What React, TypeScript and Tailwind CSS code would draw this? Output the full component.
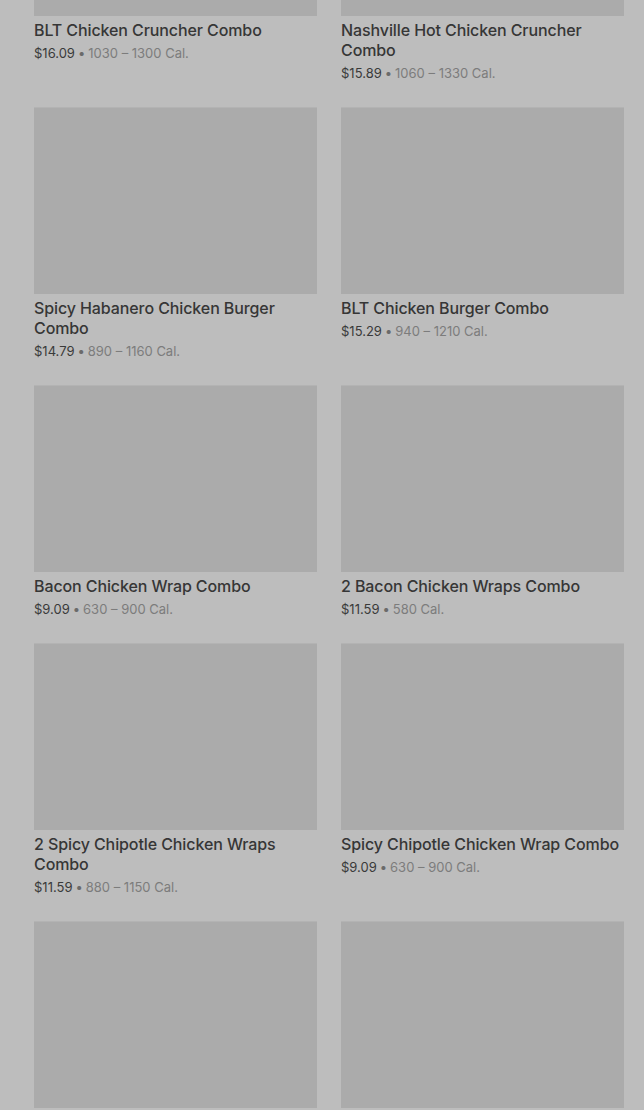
const items = [
  { name: "BLT Chicken Cruncher Combo", price: "$16.09", cal: "1030 – 1300 Cal." },
  { name: "Nashville Hot Chicken Cruncher Combo", price: "$15.89", cal: "1060 – 1330 Cal." },
  { name: "Spicy Habanero Chicken Burger Combo", price: "$14.79", cal: "890 – 1160 Cal." },
  { name: "BLT Chicken Burger Combo", price: "$15.29", cal: "940 – 1210 Cal." },
  { name: "Bacon Chicken Wrap Combo", price: "$9.09", cal: "630 – 900 Cal." },
  { name: "2 Bacon Chicken Wraps Combo", price: "$11.59", cal: "580 Cal." },
  { name: "2 Spicy Chipotle Chicken Wraps Combo", price: "$11.59", cal: "880 – 1150 Cal." },
  { name: "Spicy Chipotle Chicken Wrap Combo", price: "$9.09", cal: "630 – 900 Cal." },
];

function MenuCard({ name, price, cal }: { name: string; price: string; cal: string }) {
  return (
    <div className="flex flex-col">
      <div className="h-[187px] w-full border-t border-[#b3b3b3] bg-[#ababab]" />
      <h3 className="mt-1 text-[16px] font-medium leading-5 tracking-[-0.1px] text-[#363636]">
        {name}
      </h3>
      <p className="mt-1 text-[13px] leading-[19px]">
        <span className="text-[#3a3a3a]">{price}</span>
        <span className="mx-[3px] text-[#6a6a6a]">•</span>
        <span className="text-[#7c7c7c]">{cal}</span>
      </p>
    </div>
  );
}

export default function App() {
  return (
    <div
      className="h-[1110px] overflow-hidden bg-[#bdbdbd]"
      style={{ fontFamily: "Inter, 'Noto Sans', sans-serif" }}
    >
      <div className="-mt-[171px] grid grid-cols-2 gap-x-6 gap-y-6 pl-[34px] pr-[20px]">
        {items.map((it, i) => (
          <MenuCard key={i} {...it} />
        ))}
        <div className="h-[187px] border-t border-[#b3b3b3] bg-[#ababab]" />
        <div className="h-[187px] border-t border-[#b3b3b3] bg-[#ababab]" />
      </div>
    </div>
  );
}
